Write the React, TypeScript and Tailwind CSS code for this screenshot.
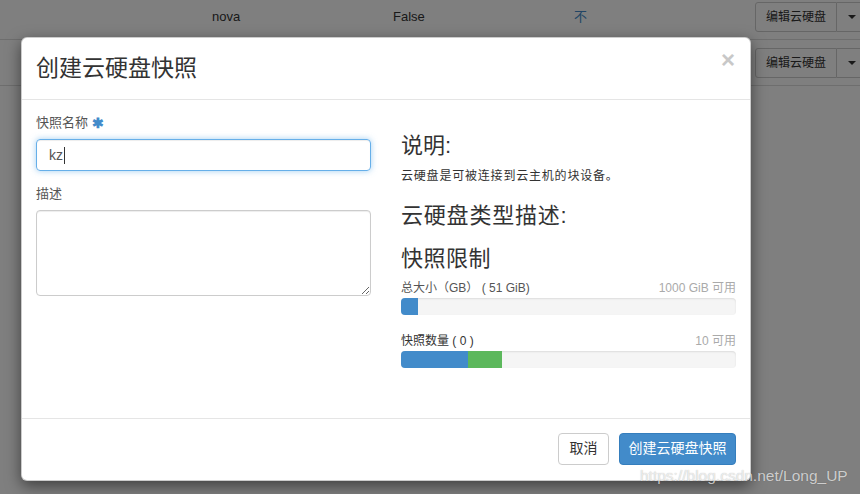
import React from "react";

const font = "font-['Liberation_Sans','Noto_Sans_CJK_SC',sans-serif]";

function PageRow() {
  return (
    <div className="flex h-[46px] items-center border-b border-[#dddddd] text-[13px] text-[#333]">
      <div className="w-[212px] shrink-0" />
      <div className="w-[181px] shrink-0">nova</div>
      <div className="w-[181px] shrink-0">False</div>
      <div className="w-[181px] shrink-0 text-[#428bca]">不</div>
      <div className="flex h-[30px] shrink-0">
        <div className="flex items-center rounded-l-[3px] border border-[#cccccc] bg-white px-[10px] text-[12px] text-[#333]">
          编辑云硬盘
        </div>
        <div className="flex w-[31px] items-center justify-center border border-l-0 border-[#cccccc] bg-white">
          <span className="h-0 w-0 border-x-[4px] border-t-[4px] border-x-transparent border-t-[#333]" />
        </div>
      </div>
    </div>
  );
}

function Bar({ parts }: { parts: { w: number; color: string }[] }) {
  return (
    <div className="flex h-[17px] overflow-hidden rounded-[4px] bg-[#f5f5f5] shadow-[inset_0_1px_2px_rgba(0,0,0,0.1)]">
      {parts.map((p, i) => (
        <div key={i} className={`h-full ${p.color}`} style={{ width: p.w }} />
      ))}
    </div>
  );
}

export default function App() {
  return (
    <div className={`relative h-[494px] w-[860px] overflow-hidden bg-white ${font}`}>
      <div className="-mt-[6px]">
        <PageRow />
        <PageRow />
      </div>

      <div className="absolute inset-0 bg-black/50" />

      <div className="absolute left-[21px] top-[37px] w-[730px] rounded-[6px] border border-black/20 bg-white shadow-[0_5px_15px_rgba(0,0,0,0.5)]">
        <div className="relative flex h-[62px] items-center border-b border-[#e5e5e5] px-[14px]">
          <h4 className="text-[23px] leading-none text-[#333]">创建云硬盘快照</h4>
          <span className="absolute right-[15px] top-[10px] text-[24px] font-bold leading-none text-[#c8c8c8]">
            ×
          </span>
        </div>

        <div className="flex h-[318px] gap-[30px] px-[14px] pt-[13px]">
          <div className="w-[335px]">
            <div className="flex h-[20px] items-center gap-[4px] text-[13px] text-[#555]">
              快照名称
              <span className="text-[14px] font-bold text-[#428bca]">✱</span>
            </div>
            <div className="mt-[6px] flex h-[32px] items-center rounded-[4px] border border-[#66afe9] px-[12px] text-[14px] text-[#555] shadow-[inset_0_1px_1px_rgba(0,0,0,0.075),0_0_6px_rgba(102,175,233,0.6)]">
              kz
              <span className="ml-[1px] h-[17px] w-px bg-[#333]" />
            </div>
            <div className="mt-[14px] flex h-[18px] items-center text-[13px] text-[#555]">描述</div>
            <textarea
              readOnly
              className="mt-[7px] block h-[86px] w-full rounded-[4px] border border-[#cccccc] shadow-[inset_0_1px_1px_rgba(0,0,0,0.075)] outline-none"
            />
          </div>

          <div className="w-[335px] text-[#333]">
            <div className="mt-[19px] flex h-[28px] items-center text-[22px] leading-none">说明:</div>
            <p className="mt-[8px] flex h-[16px] items-center text-[12px] tracking-[0.8px]">
              云硬盘是可被连接到云主机的块设备。
            </p>
            <div className="mt-[18px] flex h-[28px] items-center text-[22px] leading-none tracking-[0.8px]">
              云硬盘类型描述:
            </div>
            <div className="mt-[15px] flex h-[28px] items-center text-[22px] leading-none tracking-[0.5px]">
              快照限制
            </div>

            <div className="mt-[7px] flex h-[16px] items-center justify-between text-[12px]">
              <span className="text-[#555]">总大小（GB） ( 51 GiB)</span>
              <span className="text-[#aaa]">1000 GiB 可用</span>
            </div>
            <div className="mt-[2px]">
              <Bar parts={[{ w: 17, color: "bg-[#428bca]" }]} />
            </div>

            <div className="mt-[18px] flex h-[16px] items-center justify-between text-[12px]">
              <span className="text-[#333]">快照数量 ( 0 )</span>
              <span className="text-[#aaa]">10 可用</span>
            </div>
            <div className="mt-[2px]">
              <Bar
                parts={[
                  { w: 67, color: "bg-[#428bca]" },
                  { w: 34, color: "bg-[#5cb85c]" },
                ]}
              />
            </div>
          </div>
        </div>

        <div className="flex h-[62px] items-center justify-end gap-[10px] border-t border-[#e5e5e5] px-[14px] pb-[2px]">
          <button className="flex h-[32px] w-[51px] items-center justify-center rounded-[4px] border border-[#cccccc] bg-white text-[14px] text-[#333]">
            取消
          </button>
          <button className="flex h-[32px] w-[117px] items-center justify-center rounded-[4px] border border-[#357ebd] bg-[#428bca] text-[14px] text-white">
            创建云硬盘快照
          </button>
        </div>
      </div>

      <div className="absolute left-[640px] top-[464px] text-[15.5px] text-white/70 [text-shadow:0_0_1px_rgba(0,0,0,0.3)]">
        https://blog.csdn.net/Long_UP
      </div>
    </div>
  );
}
